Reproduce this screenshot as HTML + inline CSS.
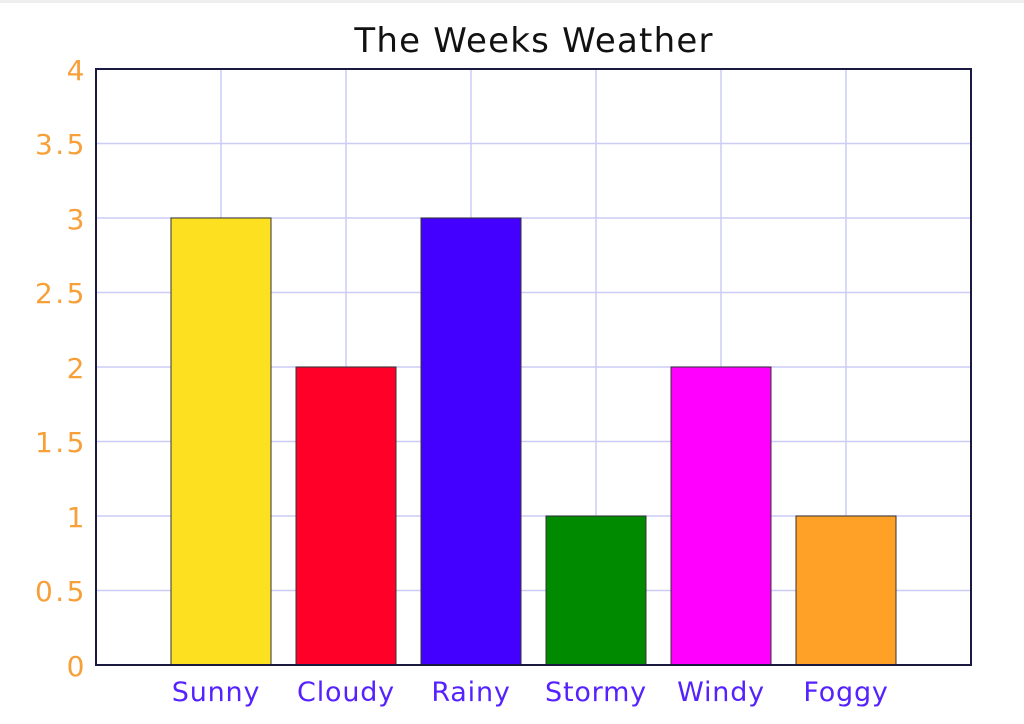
<!DOCTYPE html>
<html><head><style>html,body{margin:0;padding:0;background:#fff;}svg{display:block}</style></head>
<body>
<svg width="1024" height="724" xmlns="http://www.w3.org/2000/svg" font-family="DejaVu Sans, Verdana, sans-serif">
<rect x="0" y="0" width="1024" height="3" fill="#eeeeee"/>
<text x="534" y="52" font-size="34" letter-spacing="1.2" text-anchor="middle" fill="#111">The Weeks Weather</text>
<g stroke="#ccccf6" stroke-width="1.5">
<line x1="221" y1="69" x2="221" y2="665"/><line x1="346" y1="69" x2="346" y2="665"/>
<line x1="471" y1="69" x2="471" y2="665"/><line x1="596" y1="69" x2="596" y2="665"/>
<line x1="721" y1="69" x2="721" y2="665"/><line x1="846" y1="69" x2="846" y2="665"/>
<line x1="96" y1="143.5" x2="971" y2="143.5"/><line x1="96" y1="218" x2="971" y2="218"/>
<line x1="96" y1="292.5" x2="971" y2="292.5"/><line x1="96" y1="367" x2="971" y2="367"/>
<line x1="96" y1="441.5" x2="971" y2="441.5"/><line x1="96" y1="516" x2="971" y2="516"/>
<line x1="96" y1="590.5" x2="971" y2="590.5"/>
</g>
<g stroke="#333" stroke-width="1">
<rect x="171" y="218" width="100" height="447" fill="#fde01f"/>
<rect x="296" y="367" width="100" height="298" fill="#ff0029"/>
<rect x="421" y="218" width="100" height="447" fill="#4400ff"/>
<rect x="546" y="516" width="100" height="149" fill="#008a00"/>
<rect x="671" y="367" width="100" height="298" fill="#ff00ff"/>
<rect x="796" y="516" width="100" height="149" fill="#ffa126"/>
</g>
<rect x="96" y="69" width="875" height="596" fill="none" stroke="#1a1a40" stroke-width="2"/>
<g font-size="28" letter-spacing="2.5" fill="#f7a03a" text-anchor="end">
<text x="87" y="80">4</text><text x="87" y="154">3.5</text><text x="87" y="229">3</text>
<text x="87" y="303">2.5</text><text x="87" y="378">2</text><text x="87" y="452">1.5</text>
<text x="87" y="527">1</text><text x="87" y="601">0.5</text><text x="87" y="676">0</text>
</g>
<g font-size="27" letter-spacing="0.8" fill="#5522ff" text-anchor="middle">
<text x="216" y="701">Sunny</text><text x="346" y="701">Cloudy</text><text x="471" y="701">Rainy</text>
<text x="596" y="701">Stormy</text><text x="721" y="701">Windy</text><text x="846" y="701">Foggy</text>
</g>
</svg>
</body></html>
